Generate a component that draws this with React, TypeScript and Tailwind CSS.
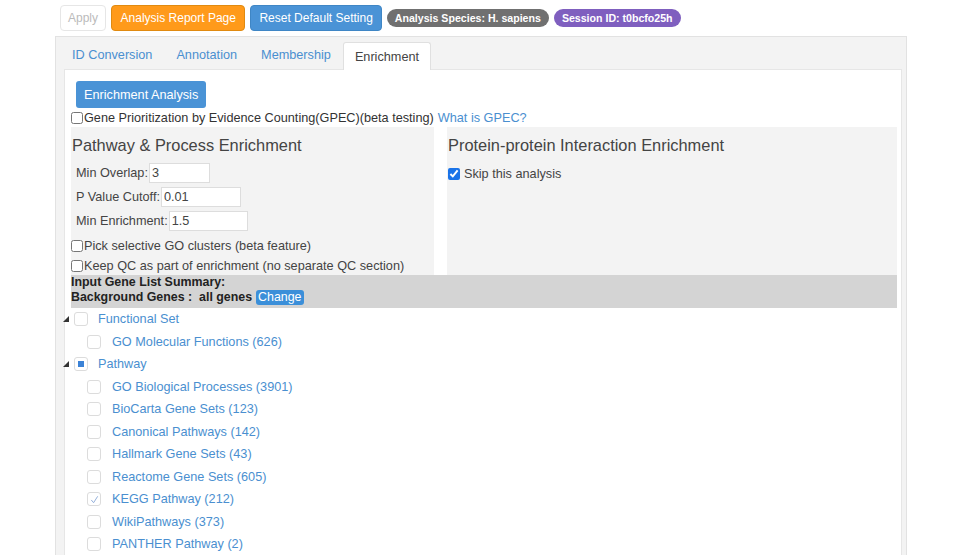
const font = { fontFamily: '"Liberation Sans", Arial, sans-serif' };

const Box = ({ checked, partial }: { checked?: boolean; partial?: boolean }) => (
  <span className="inline-flex h-[14px] w-[14px] items-center justify-center rounded-[3px] border border-[#dcdcdc] bg-white">
    {partial && <span className="h-[6px] w-[6px] bg-[#3b82d6]" />}
    {checked && (
      <svg width="11" height="11" viewBox="0 0 12 12">
        <path d="M2.5 6.5 L5 9.5 L9.5 2.5" fill="none" stroke="#8aa9d6" strokeWidth="1" />
      </svg>
    )}
  </span>
);

const Caret = () => (
  <svg width="6" height="6" viewBox="0 0 6 6" className="mr-[5px]">
    <path d="M6 0 L6 6 L0 6 Z" fill="#333" />
  </svg>
);

const NativeBox = ({ on }: { on?: boolean }) => (
  <input type="checkbox" defaultChecked={on} className="m-0 h-[12px] w-[12px] accent-[#1a73e8]" />
);

export default function App() {
  const children = [
    ["GO Biological Processes (3901)", false],
    ["BioCarta Gene Sets (123)", false],
    ["Canonical Pathways (142)", false],
    ["Hallmark Gene Sets (43)", false],
    ["Reactome Gene Sets (605)", false],
    ["KEGG Pathway (212)", true],
    ["WikiPathways (373)", false],
    ["PANTHER Pathway (2)", false],
  ] as const;

  return (
    <div className="h-[555px] w-[958px] overflow-hidden bg-white text-[12.7px] leading-[16px] text-[#333]" style={font}>
      <div className="flex items-center gap-[5px] pl-[60px] pt-[5px]">
        <button className="h-[26px] rounded-[4px] border border-[#e6e6e6] bg-white px-[7px] text-[12px] text-[#bbb]">Apply</button>
        <button className="h-[26px] rounded-[4px] border border-[#e08a10] bg-[#ff9a1a] px-[8.5px] text-[12px] text-white">Analysis Report Page</button>
        <button className="h-[26px] rounded-[4px] border border-[#3f86c5] bg-[#4a93d6] px-[8px] text-[12px] text-white">Reset Default Setting</button>
        <span className="rounded-full bg-[#707070] px-[8px] py-[3px] text-[10.6px] leading-[12px] font-bold text-white">Analysis Species: H. sapiens</span>
        <span className="rounded-full bg-[#7f5fbf] px-[8px] py-[3px] text-[10.6px] leading-[12px] font-bold text-white">Session ID: t0bcfo25h</span>
      </div>

      <div className="ml-[55px] mt-[5px] w-[852px] border border-[#e2e2e2] bg-[#f3f3f3] pl-[8px] pr-[4px] pt-[5px]">
        <div className="-ml-[4px] flex h-[27px] items-end">
          {["ID Conversion", "Annotation", "Membership"].map((t) => (
            <div key={t} className="px-[12px] pb-[6px] text-[#4a8fd0]">{t}</div>
          ))}
          <div className="relative -mb-px h-[28px] rounded-t-[3px] border border-b-0 border-[#e0e0e0] bg-white px-[11px] pt-[6px] text-[#444]">Enrichment</div>
        </div>
        <div className="border border-[#e6e6e6] bg-white pb-[20px] pl-[6px] pr-[4px]">
          <div className="pl-[5px] pt-[11px]">
            <button className="h-[27px] rounded-[3px] bg-[#4a93d6] px-[8px] text-[12.7px] text-white">Enrichment Analysis</button>
          </div>
          <div className="flex h-[19px] items-center">
            <NativeBox />
            <span className="ml-[1px]">Gene Prioritization by Evidence Counting(GPEC)(beta testing)</span>
            <span className="ml-[4px] text-[#4a8fd0]">What is GPEC?</span>
          </div>
          <div className="flex">
            <div className="w-[363px] bg-[#f3f3f3] pb-[1px] pl-[1px]">
              <div className="pt-[8px] text-[16.4px] leading-[20px] text-[#444]">Pathway &amp; Process Enrichment</div>
              <div className="ml-[4px] mt-[8px] flex flex-col gap-[4px] text-[#444]">
                <label className="flex items-center">Min Overlap:<input defaultValue="3" className="ml-[1px] h-[20px] w-[61px] border border-[#ddd] bg-white px-[2px] text-[12.7px]" /></label>
                <label className="flex items-center">P Value Cutoff:<input defaultValue="0.01" className="ml-[1px] h-[20px] w-[80px] border border-[#ddd] bg-white px-[2px] text-[12.7px]" /></label>
                <label className="flex items-center">Min Enrichment:<input defaultValue="1.5" className="ml-[1px] h-[20px] w-[79px] border border-[#ddd] bg-white px-[2px] text-[12.7px]" /></label>
              </div>
              <div className="-ml-[1px] mt-[7px] flex h-[16px] items-center text-[#444]"><NativeBox /><span className="ml-[1px]">Pick selective GO clusters (beta feature)</span></div>
              <div className="-ml-[1px] mt-[4px] flex h-[16px] items-center text-[#444]"><NativeBox /><span className="ml-[1px]">Keep QC as part of enrichment (no separate QC section)</span></div>
            </div>
            <div className="w-[13px]" />
            <div className="flex-1 bg-[#f3f3f3] pl-[1px]">
              <div className="pt-[8px] text-[16.4px] leading-[20px] text-[#444]">Protein-protein Interaction Enrichment</div>
              <div className="mt-[11px] flex h-[16px] items-center text-[#444]"><NativeBox on /><span className="ml-[4px]">Skip this analysis</span></div>
            </div>
          </div>
          <div className="bg-[#d4d4d4] pb-[3px] text-[12.4px] font-bold leading-[15px] text-[#222]">
            <div>Input Gene List Summary:</div>
            <div className="flex items-center">
              Background Genes :&nbsp; all genes
              <span className="ml-[4px] rounded-[3px] bg-[#3b8fd9] px-[2px] font-normal text-white">Change</span>
            </div>
          </div>
          <div className="-ml-[8px] text-[#4a8fd0]">
            <div className="flex h-[22.5px] items-center"><Caret /><Box /><span className="ml-[10px]">Functional Set</span></div>
            <div className="flex h-[22.5px] items-center pl-[24px]"><Box /><span className="ml-[11px]">GO Molecular Functions (626)</span></div>
            <div className="flex h-[22.5px] items-center"><Caret /><Box partial /><span className="ml-[10px]">Pathway</span></div>
            {children.map(([t, c]) => (
              <div key={t} className="flex h-[22.5px] items-center pl-[24px]"><Box checked={c} /><span className="ml-[11px]">{t}</span></div>
            ))}
          </div>
        </div>
      </div>
    </div>
  );
}
